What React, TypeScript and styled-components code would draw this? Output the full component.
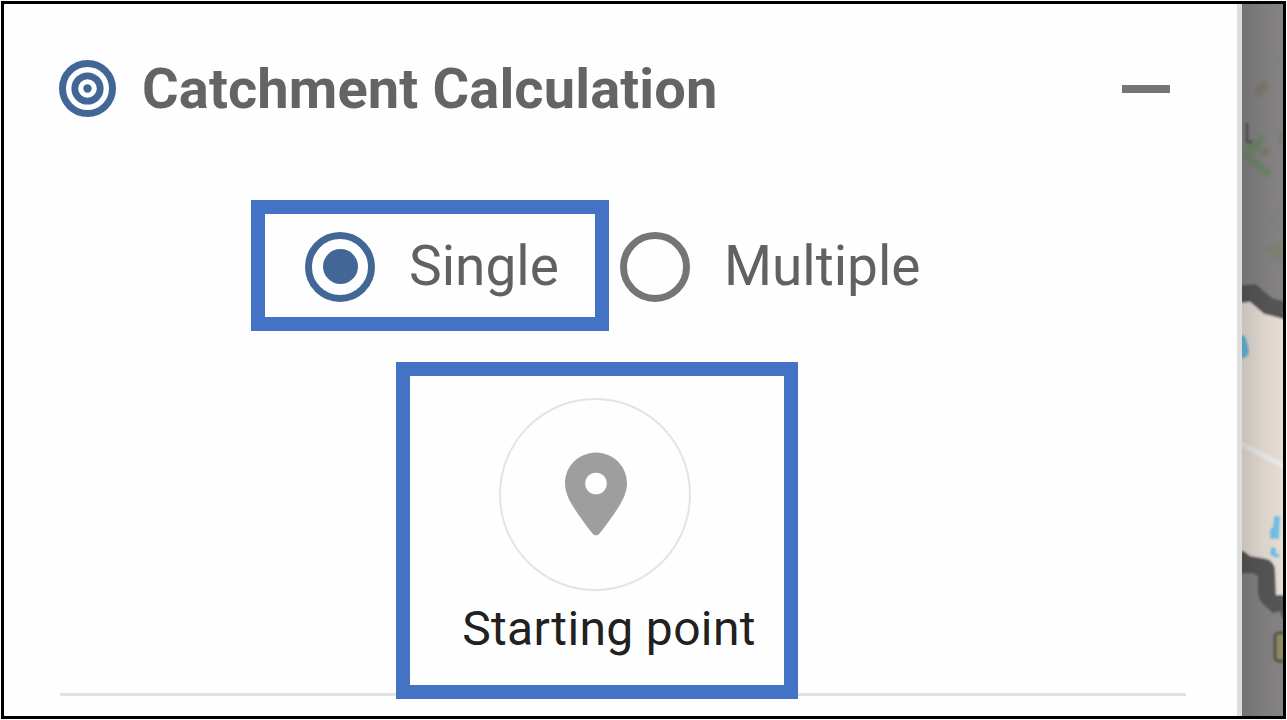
import React from "react";
import styled, { createGlobalStyle } from "styled-components";

const GlobalStyle = createGlobalStyle`
  *, *::before, *::after { box-sizing: border-box; }
  body { margin: 0; background: #fff; font-family: Roboto, sans-serif; }
`;

const Screen = styled.div`
  width: 1287px;
  height: 720px;
  padding: 1px;
  overflow: hidden;
`;

const Frame = styled.div`
  display: flex;
  width: 1285px;
  height: 718px;
  border: 3px solid #000;
`;

const Panel = styled.main`
  display: flex;
  flex-direction: column;
  width: 1238px;
  flex: none;
  background: #fefefe;
  border-right: 5px solid #dedede;
`;

const Header = styled.header`
  display: flex;
  align-items: center;
  height: 169px;
  margin-left: 55px;
  width: 1111px;
`;

const Title = styled.h1`
  margin: 0 0 0 26px;
  flex: 1;
  font-size: 56px;
  line-height: 66px;
  font-weight: 700;
  letter-spacing: 0.14px;
  white-space: nowrap;
  color: #646464;
`;

const CollapseButton = styled.button`
  width: 48px;
  height: 57px;
  padding: 0;
  border: 0;
  background: none;
  display: flex;
  align-items: center;
`;

const CollapseBar = styled.span`
  width: 48px;
  height: 8px;
  background: #757575;
`;

const Choices = styled.div`
  display: flex;
  margin: 27px 0 0 247px;
  height: 131px;
`;

const Choice = styled.label<{ $highlighted?: boolean }>`
  display: flex;
  align-items: center;
  gap: 34px;
  height: 131px;
  width: ${(p) => (p.$highlighted ? "358px" : "auto")};
  border: ${(p) => (p.$highlighted ? "14px solid #4472c4" : "0")};
  padding-left: ${(p) => (p.$highlighted ? "40px" : "11px")};
`;

const RadioMark = styled.span<{ $checked?: boolean }>`
  display: flex;
  align-items: center;
  justify-content: center;
  flex: none;
  width: 70px;
  height: 70px;
  margin-top: 2px;
  border: 7px solid ${(p) => (p.$checked ? "#426796" : "#757575")};
  border-radius: 50%;

  &::after {
    content: "";
    width: 35px;
    height: 35px;
    border-radius: 50%;
    background: ${(p) => (p.$checked ? "#426796" : "transparent")};
  }
`;

const ChoiceText = styled.span`
  margin-top: 1px;
  font-size: 55px;
  line-height: 66px;
  color: #616161;
`;

const PointPicker = styled.section`
  position: relative;
  display: flex;
  flex-direction: column;
  align-items: center;
  flex: none;
  width: 402px;
  height: 337px;
  margin: 31px 0 0 392px;
  padding: 22px 4px 0 0;
  border: 14px solid #4472c4;
  background: #fefefe;
`;

const PinButton = styled.button`
  display: flex;
  align-items: center;
  justify-content: center;
  width: 192px;
  height: 193px;
  padding: 0 0 2px 1px;
  border: 2px solid #e4e4e4;
  border-radius: 50%;
  background: none;
`;

const PointLabel = styled.span`
  margin: 10px 0 0 28px;
  font-size: 48px;
  line-height: 56px;
  letter-spacing: 0.35px;
  white-space: nowrap;
  color: #212121;
`;

const Divider = styled.hr`
  width: 1126px;
  height: 3px;
  margin: -6px 0 0 56px;
  border: 0;
  flex: none;
  background: #e2e2e2;
`;

const MapStrip = styled.aside`
  width: 41px;
  height: 712px;
  overflow: hidden;

  svg { display: block; }
`;

function TargetIcon() {
  return (
    <svg width="57" height="57" viewBox="0 0 57 57" fill="none" stroke="#426796">
      <circle cx="28.5" cy="28.5" r="25" strokeWidth="7" />
      <circle cx="28.5" cy="28.5" r="12.7" strokeWidth="6.8" />
      <circle cx="28.5" cy="28.5" r="4.2" fill="#426796" stroke="none" />
    </svg>
  );
}

function PinIcon() {
  return (
    <svg width="62" height="84" viewBox="0 0 62 84">
      <path
        fill="#9e9e9e"
        fillRule="evenodd"
        d="M31 .5C13.900 .5 0 14.300 0 31.300C0 38.500 2.800 45.500 6.600 52C12.500 62 20 72 27.300 81.300C29.300 84 32.700 84 34.700 81.300C42 72 49.500 62 55.400 52C59.200 45.500 62 38.500 62 31.300C62 14.300 48.100 .5 31 .5ZM31 20.700A10.800 10.800 0 1 1 31 42.300A10.800 10.800 0 1 1 31 20.700Z"
      />
    </svg>
  );
}

function MapView() {
  return (
    <svg width="41" height="712" viewBox="0 0 41 712" fill="none">
      <defs>
        <linearGradient id="shade">
          <stop offset="0" stopColor="#000" stopOpacity=".13" />
          <stop offset=".55" stopColor="#000" stopOpacity=".04" />
          <stop offset="1" stopColor="#000" stopOpacity="0" />
        </linearGradient>
        <filter id="soft" filterUnits="userSpaceOnUse" x="-20" y="-20" width="80" height="752">
          <feGaussianBlur stdDeviation="0.8" />
        </filter>
        <filter id="faded" filterUnits="userSpaceOnUse" x="-20" y="-20" width="80" height="752">
          <feGaussianBlur stdDeviation="1.6" />
        </filter>
      </defs>
      <path fill="#848282" d="M0 0H41V712H0Z" />
      <g filter="url(#faded)">
        <path stroke="#7d8487" strokeWidth="2" d="M5 60L18 60L41 56M0 192L28 215L41 226M28 215L38 207" />
        <path stroke="#7d8487" strokeWidth="5" d="M-2 574L14 567L41 560" />
        <path stroke="#7c7a6d" strokeWidth="9" d="M14 90L25 79" />
        <path stroke="#6f836a" strokeWidth="8" d="M22 133L4 151L27 171M8 137L17 146" />
        <path stroke="#7c7a6d" strokeWidth="7" d="M18 150L27 146M41 128V140" />
        <path fill="#7d8172" d="M23 244L36 238L43 240V264L32 254Z" />
      </g>
      <g filter="url(#soft)">
        <path fill="#e5ddd4" d="M-5 292L10 293L24 306L46 314V600H30L25 562L10 556L-5 552Z" />
        <path stroke="#5c5b5b" strokeWidth="3" d="M5 119V138H10" />
        <path stroke="#565657" strokeWidth="17" d="M-8 291L11 289L26 302L48 308" />
        <path
          fill="#565657"
          d="M-5 545L3 548L8 552L25 555Q32 558 33 565L34 591H46V615H41L38 607L31 609L20 599Q16 594 16 586V573Q14 569 10 569H-5Z"
        />
        <path stroke="#ebebea" strokeWidth="5" d="M-3 439L46 464" />
        <path fill="#67b5d9" d="M-2 330L3 332L6 341L7 348L5 353L-2 355Z" />
        <path fill="#70c2e8" d="M32 512H38L37 535H28V525L31 523ZM29 543L34 544V549L38 551L36 554L28 551Z" />
        <rect x="33" y="629" width="22" height="28" rx="4" fill="#908a62" stroke="#525251" strokeWidth="3" />
      </g>
      <path fill="url(#shade)" d="M0 0H41V712H0Z" />
    </svg>
  );
}

export default function App() {
  return (
    <>
      <GlobalStyle />
      <Screen>
        <Frame>
          <Panel>
            <Header>
              <TargetIcon />
              <Title>Catchment Calculation</Title>
              <CollapseButton aria-label="Collapse">
                <CollapseBar />
              </CollapseButton>
            </Header>
            <Choices>
              <Choice $highlighted>
                <RadioMark $checked />
                <ChoiceText>Single</ChoiceText>
              </Choice>
              <Choice>
                <RadioMark />
                <ChoiceText>Multiple</ChoiceText>
              </Choice>
            </Choices>
            <PointPicker>
              <PinButton aria-label="Set starting point">
                <PinIcon />
              </PinButton>
              <PointLabel>Starting point</PointLabel>
            </PointPicker>
            <Divider />
          </Panel>
          <MapStrip>
            <MapView />
          </MapStrip>
        </Frame>
      </Screen>
    </>
  );
}
